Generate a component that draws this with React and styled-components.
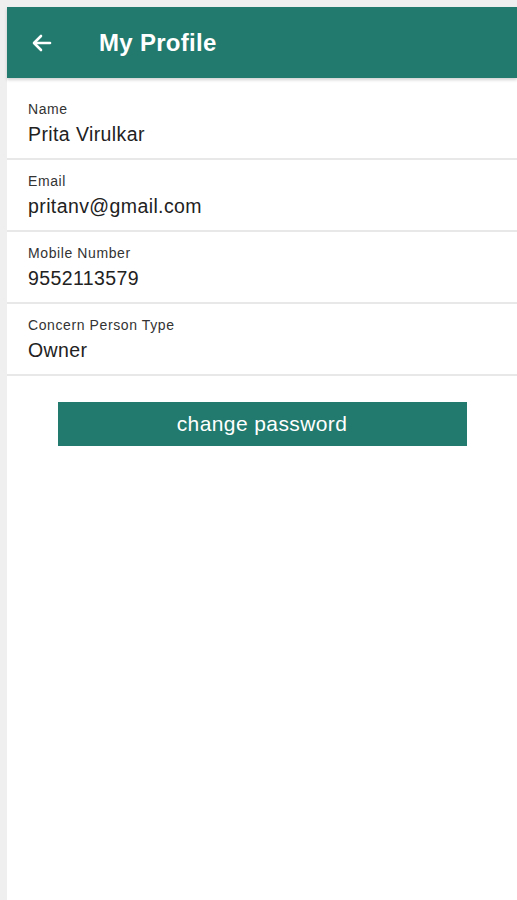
import React from "react";
import styled, { createGlobalStyle } from "styled-components";

const GlobalStyle = createGlobalStyle`
  html, body {
    margin: 0;
    padding: 0;
    background: #efefef;
    font-family: "Liberation Sans", Arial, sans-serif;
  }
  #root {
    min-height: 100vh;
  }
`;

const Page = styled.div`
  margin: 7px 0 0 7px;
  min-height: calc(100vh - 7px);
  background: #ffffff;
  display: flex;
  flex-direction: column;
`;

const Header = styled.header`
  height: 71px;
  background: #217a6d;
  display: flex;
  align-items: center;
  gap: 44px;
  padding-left: 22px;
  box-shadow: 0 2px 3px rgba(0, 0, 0, 0.18);
`;

const BackButton = styled.button`
  border: 0;
  background: none;
  padding: 0;
  width: 26px;
  height: 26px;
  display: flex;
  align-items: center;
  justify-content: center;
  color: #ffffff;
  cursor: pointer;
`;

const Title = styled.h1`
  margin: 0;
  color: #ffffff;
  font-size: 24px;
  letter-spacing: 0.3px;
  font-weight: bold;
`;

const List = styled.div`
  padding-top: 16px;
  display: flex;
  flex-direction: column;
`;

const Row = styled.div`
  padding: ${(p) => (p.$first ? "7px" : "13px")} 20px 12px 21px;
  border-bottom: 2px solid #e8e8e8;
  display: flex;
  flex-direction: column;
  gap: 5px;
`;

const Label = styled.span`
  font-size: 14px;
  letter-spacing: 0.6px;
  line-height: 16px;
  color: #333333;
`;

const Value = styled.span`
  font-size: 19.5px;
  letter-spacing: 0.4px;
  line-height: 24px;
  color: #222222;
`;

const Actions = styled.div`
  display: flex;
  justify-content: center;
  padding-top: 26px;
`;

const PrimaryButton = styled.button`
  width: 409px;
  height: 44px;
  border: 0;
  background: #217a6d;
  color: #ffffff;
  font-family: "Liberation Sans", Arial, sans-serif;
  font-size: 21px;
  letter-spacing: 0.4px;
  cursor: pointer;
`;

const fields = [
  { label: "Name", value: "Prita Virulkar" },
  { label: "Email", value: "pritanv@gmail.com" },
  { label: "Mobile Number", value: "9552113579" },
  { label: "Concern Person Type", value: "Owner" },
];

function App() {
  return (
    <>
      <GlobalStyle />
      <Page>
        <Header>
          <BackButton aria-label="back">
            <svg width="24" height="24" viewBox="0 0 24 24" fill="none" stroke="currentColor" strokeWidth="2.6" strokeLinecap="round" strokeLinejoin="round">
              <path d="M20 12H4.5" />
              <path d="M11 5l-7 7 7 7" />
            </svg>
          </BackButton>
          <Title>My Profile</Title>
        </Header>
        <List>
          {fields.map((f, i) => (
            <Row key={f.label} $first={i === 0}>
              <Label>{f.label}</Label>
              <Value>{f.value}</Value>
            </Row>
          ))}
        </List>
        <Actions>
          <PrimaryButton>change password</PrimaryButton>
        </Actions>
      </Page>
    </>
  );
}

export default App;
